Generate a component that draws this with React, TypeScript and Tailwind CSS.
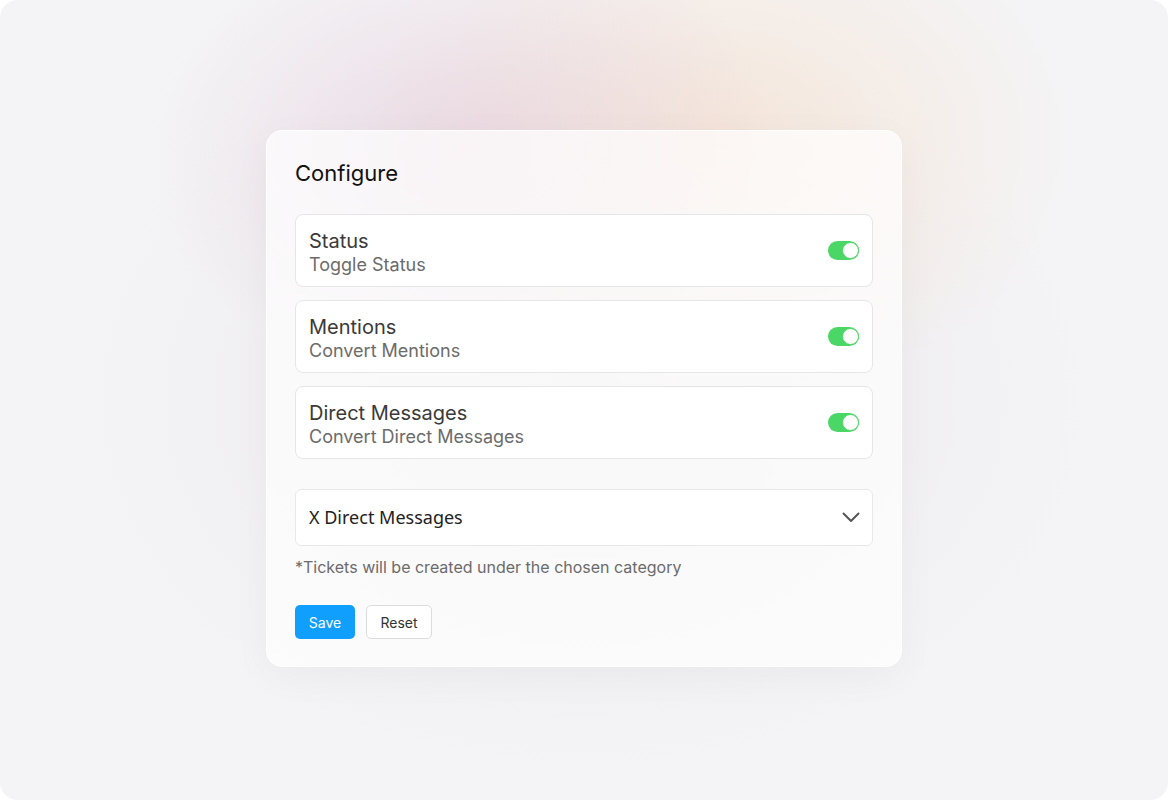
import { useState } from 'react';

type Option = {
    key: string;
    title: string;
    subtitle: string;
};

const options: Option[] = [
    { key: 'status', title: 'Status', subtitle: 'Toggle Status' },
    { key: 'mentions', title: 'Mentions', subtitle: 'Convert Mentions' },
    { key: 'dms', title: 'Direct Messages', subtitle: 'Convert Direct Messages' },
];

function Toggle({ on, onClick }: { on: boolean; onClick: () => void }) {
    return (
        <button
            onClick={onClick}
            className={`relative w-[31px] h-[19px] rounded-full shrink-0 ${
                on ? 'bg-[#4ad765]' : 'bg-[#d4d4d8]'
            }`}
        >
            <span
                className={`absolute top-[1px] w-[17px] h-[17px] rounded-full bg-white border border-[#4ad765] ${
                    on ? 'right-[0px]' : 'left-[1px]'
                }`}
            />
        </button>
    );
}

export default function App() {
    const [enabled, setEnabled] = useState<Record<string, boolean>>({
        status: true,
        mentions: true,
        dms: true,
    });

    return (
        <div className="w-[1168px] h-[800px] bg-white">
            <div className="relative w-full h-full rounded-[18px] overflow-hidden bg-[#f4f4f6] flex items-center justify-center font-['Inter',sans-serif]">
                {/* soft glow behind the card */}
                <div className="absolute inset-0 bg-[radial-gradient(ellipse_320px_230px_at_460px_150px,rgba(226,196,214,0.5),transparent),radial-gradient(ellipse_360px_260px_at_720px_140px,rgba(246,222,200,0.6),transparent),radial-gradient(ellipse_520px_380px_at_584px_400px,rgba(232,226,230,0.7),transparent)]" />

                <div className="relative mb-[3px] w-[636px] rounded-[16px] bg-white/70 border border-white shadow-[0_10px_40px_rgba(0,0,0,0.04)] px-[28px] pt-[28px] pb-[27px]">
                    <h1 className="text-[22px] leading-[28px] text-[#111] font-normal">Configure</h1>

                    <div className="mt-[27px] flex flex-col gap-[13px]">
                        {options.map((o) => (
                            <div
                                key={o.key}
                                className="flex items-center justify-between bg-white border border-[#e6e6e8] rounded-[8px] pl-[13px] pr-[13px] h-[73px]"
                            >
                                <div className="pt-[4px]">
                                    <p className="text-[20px] leading-[23px] text-[#3a3a3a]">{o.title}</p>
                                    <p className="text-[18px] leading-[23px] text-[#6b6b6b]">{o.subtitle}</p>
                                </div>
                                <Toggle
                                    on={enabled[o.key]}
                                    onClick={() => setEnabled({ ...enabled, [o.key]: !enabled[o.key] })}
                                />
                            </div>
                        ))}
                    </div>

                    <div className="mt-[30px] h-[57px] flex items-center justify-between bg-white border border-[#e8e8ea] rounded-[6px] pl-[13px] pr-[12px]">
                        <span className="text-[18px] text-[#222] font-['Noto_Sans',sans-serif]">X Direct Messages</span>
                        <svg width="18" height="11" viewBox="0 0 18 11" fill="none">
                            <path d="M1.5 1.5L9 9L16.5 1.5" stroke="#555" strokeWidth="2" strokeLinecap="round" strokeLinejoin="round" />
                        </svg>
                    </div>

                    <p className="mt-[9px] text-[16px] leading-[24px] text-[#6b6b6b]">
                        *Tickets will be created under the chosen category
                    </p>

                    <div className="mt-[26px] flex gap-[11px]">
                        <button className="h-[34px] w-[60px] rounded-[5px] bg-[#109ffd] text-white text-[14px]">
                            Save
                        </button>
                        <button className="h-[34px] w-[66px] rounded-[5px] bg-white border border-[#dcdcde] text-[#333] text-[14px]">
                            Reset
                        </button>
                    </div>
                </div>
            </div>
        </div>
    );
}
